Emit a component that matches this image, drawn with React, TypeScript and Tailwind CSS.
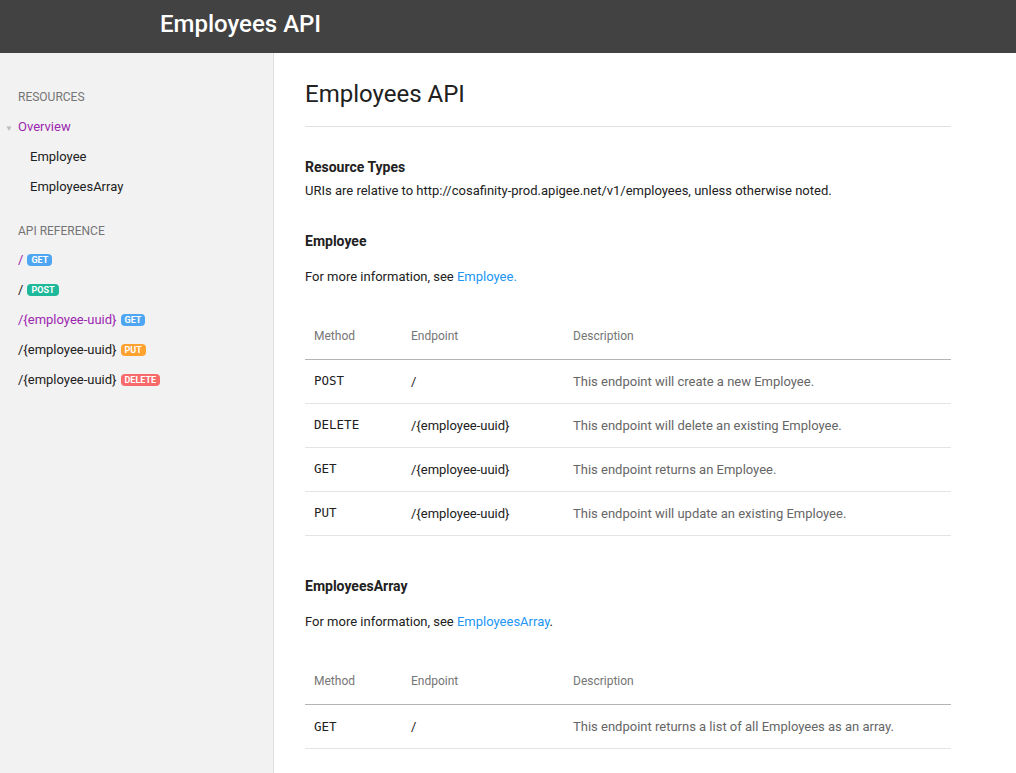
const font = { fontFamily: "Roboto, 'Liberation Sans', sans-serif" };

type Badge = "GET" | "POST" | "PUT" | "DELETE";

const badgeColor: Record<Badge, string> = {
  GET: "bg-[#4ea6f2]",
  POST: "bg-[#1eb89a]",
  PUT: "bg-[#ffa230]",
  DELETE: "bg-[#f76a6a]",
};

function MethodBadge({ m }: { m: Badge }) {
  return (
    <span
      className={`${badgeColor[m]} ml-[4px] inline-flex h-[12px] items-center rounded-[4px] px-[4px] text-[9px] font-bold leading-none text-white`}
    >
      {m}
    </span>
  );
}

const refs: { path: string; m: Badge; active?: boolean }[] = [
  { path: "/", m: "GET", active: true },
  { path: "/", m: "POST" },
  { path: "/{employee-uuid}", m: "GET", active: true },
  { path: "/{employee-uuid}", m: "PUT" },
  { path: "/{employee-uuid}", m: "DELETE" },
];

function Sidebar() {
  return (
    <aside className="w-[274px] shrink-0 border-r border-[#e0e0e0] bg-[#f2f2f2] pt-[29px] text-[13px]">
      <div className="flex h-[30px] items-center pl-[18px] text-[12px] uppercase text-[#757575]">Resources</div>
      <div className="relative flex h-[30px] items-center pl-[18px] text-[#9c27b0]">
        <span className="absolute left-[5px] top-[11px] text-[8px] text-[#bdbdbd]">▼</span>
        Overview
      </div>
      <div className="flex h-[30px] items-center pl-[30px] text-[#212121]">Employee</div>
      <div className="flex h-[30px] items-center pl-[30px] text-[#212121]">EmployeesArray</div>
      <div className="mt-[14px] flex h-[29px] items-center pl-[18px] text-[12px] uppercase text-[#757575]">API Reference</div>
      {refs.map((r, i) => (
        <div key={i} className="flex h-[30px] items-center pl-[18px]">
          <span className={r.active ? "text-[#9c27b0]" : "text-[#212121]"}>{r.path}</span>
          <MethodBadge m={r.m} />
        </div>
      ))}
    </aside>
  );
}

type Row = { method: string; endpoint: string; desc: string };

function EndpointTable({ rows, className }: { rows: Row[]; className: string }) {
  return (
    <table className={`${className} w-full table-fixed border-collapse text-left text-[13px]`}>
      <colgroup>
        <col className="w-[106px]" />
        <col className="w-[162px]" />
        <col />
      </colgroup>
      <thead>
        <tr className="h-[46px] border-b border-[#b4b4b4] text-[12px] text-[#757575]">
          <th className="pl-[9px] font-normal">Method</th>
          <th className="font-normal">Endpoint</th>
          <th className="font-normal">Description</th>
        </tr>
      </thead>
      <tbody>
        {rows.map((r, i) => (
          <tr key={i} className="h-[44px] border-b border-[#e4e4e4]">
            <td className="pl-[9px] pt-[1px] text-[12.5px] text-[#212121]" style={{ fontFamily: "'DejaVu Sans Mono', monospace" }}>
              {r.method}
            </td>
            <td className="pt-[1px] text-[#212121]">{r.endpoint}</td>
            <td className="pt-[1px] text-[#666666]">{r.desc}</td>
          </tr>
        ))}
      </tbody>
    </table>
  );
}

export default function App() {
  return (
    <div className="min-h-[773px] bg-white" style={font}>
      <header className="flex h-[53px] items-center bg-[#424242] pb-[6px] pl-[160px]">
        <h1 className="text-[24px] font-medium text-white">Employees API</h1>
      </header>
      <div className="flex min-h-[720px]">
        <Sidebar />
        <main className="w-[677px] pl-[31px] pt-[25px] text-[#212121]">
          <h2 className="border-b border-[#e0e0e0] pb-4 text-[24px] leading-[32px]">Employees API</h2>
          <h3 className="mt-[30px] text-[14px] font-bold leading-[20px]">Resource Types</h3>
          <p className="mt-[4px] text-[13px] leading-[20px]">
            URIs are relative to http://cosafinity-prod.apigee.net/v1/employees, unless otherwise noted.
          </p>

          <h3 className="mt-[30px] text-[14px] font-bold leading-[20px]">Employee</h3>
          <p className="mt-[16px] text-[13px] leading-[20px]">
            For more information, see <a className="text-[#2196f3]">Employee.</a>
          </p>
          <EndpointTable
            className="mt-[26px]"
            rows={[
              { method: "POST", endpoint: "/", desc: "This endpoint will create a new Employee." },
              { method: "DELETE", endpoint: "/{employee-uuid}", desc: "This endpoint will delete an existing Employee." },
              { method: "GET", endpoint: "/{employee-uuid}", desc: "This endpoint returns an Employee." },
              { method: "PUT", endpoint: "/{employee-uuid}", desc: "This endpoint will update an existing Employee." },
            ]}
          />

          <h3 className="mt-[40px] text-[14px] font-bold leading-[20px]">EmployeesArray</h3>
          <p className="mt-[16px] text-[13px] leading-[20px]">
            For more information, see <a className="text-[#2196f3]">EmployeesArray</a>.
          </p>
          <EndpointTable
            className="mt-[27px]"
            rows={[{ method: "GET", endpoint: "/", desc: "This endpoint returns a list of all Employees as an array." }]}
          />
        </main>
      </div>
    </div>
  );
}
